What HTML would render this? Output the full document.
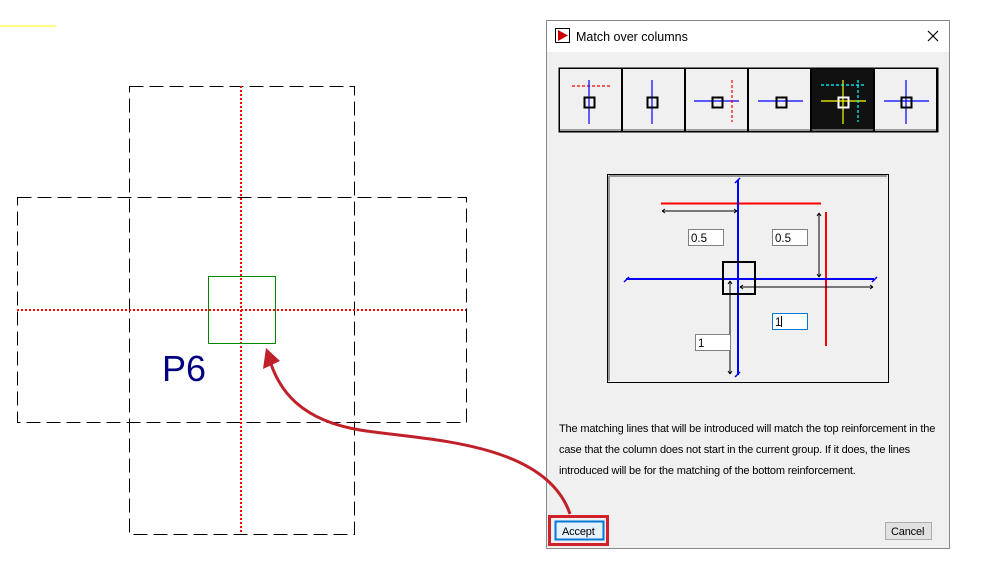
<!DOCTYPE html>
<html><head><style>
body{margin:0;width:984px;height:582px;background:#fff;overflow:hidden;font-family:"Liberation Sans",sans-serif}
svg{position:absolute;left:0;top:0}
.t{font-size:11px;fill:#000;letter-spacing:-0.17px}
</style></head><body>
<svg width="984" height="582" xmlns="http://www.w3.org/2000/svg">
<line x1="0" y1="26" x2="56" y2="26" stroke="#ff0" stroke-width="1"/>
<g fill="none" stroke="#000" stroke-dasharray="14,6">
<rect x="129.5" y="86.5" width="225" height="448"/>
<rect x="17.5" y="197.5" width="449" height="225"/>
</g>
<g stroke="#f00" stroke-width="2" stroke-dasharray="2,2">
<line x1="241" y1="86" x2="241" y2="534"/>
<line x1="17" y1="310" x2="466" y2="310"/>
</g>
<rect x="208.5" y="276.5" width="67" height="67" fill="none" stroke="#080"/>
<text x="162" y="381" font-size="36" fill="#000080" textLength="44" lengthAdjust="spacingAndGlyphs">P6</text>

<!-- dialog -->
<rect x="546.5" y="20.5" width="403" height="528" fill="#f0f0f0" stroke="#888"/>
<rect x="547" y="21" width="402" height="31" fill="#fff"/>
<rect x="555.5" y="28.5" width="14" height="14" fill="#fff" stroke="#000"/>
<polygon points="558,30 568,35.5 558,41" fill="#c00"/>
<text x="576" y="41" font-size="12.5" fill="#000">Match over columns</text>
<path d="M928 31 L938 41 M938 31 L928 41" stroke="#000" stroke-width="1.2"/>

<!-- buttons -->
<rect x="558.5" y="67.5" width="380" height="65" fill="#000"/>
<g fill="#f0f0f0">
<rect x="560" y="69" width="61" height="60"/>
<rect x="623" y="69" width="61" height="60"/>
<rect x="686" y="69" width="61" height="60"/>
<rect x="749" y="69" width="61" height="60"/>
<rect x="875" y="69" width="61" height="60"/>
</g>
<rect x="812" y="69" width="61" height="60" fill="#111"/>
<g fill="#a0a0a0"><rect x="560" y="129" width="61" height="2"/><rect x="623" y="129" width="61" height="2"/><rect x="686" y="129" width="61" height="2"/><rect x="749" y="129" width="61" height="2"/><rect x="875" y="129" width="61" height="2"/><rect x="812" y="129" width="61" height="2" fill="#666"/></g>
<g fill="none" stroke-width="1.2">
<line x1="572" y1="86" x2="610" y2="86" stroke="#f00" stroke-dasharray="3,2"/>
<line x1="589" y1="80" x2="589" y2="124" stroke="#00f"/>
<rect x="584.5" y="97.5" width="10" height="10" stroke="#000" stroke-width="2"/>
<line x1="652" y1="80" x2="652" y2="124" stroke="#00f"/>
<rect x="647.5" y="97.5" width="10" height="10" stroke="#000" stroke-width="2"/>
<line x1="694" y1="101" x2="739" y2="101" stroke="#00f"/>
<line x1="732" y1="80" x2="732" y2="122" stroke="#f00" stroke-dasharray="3,2"/>
<rect x="712.5" y="97.5" width="10" height="10" stroke="#000" stroke-width="2"/>
<line x1="758" y1="101" x2="803" y2="101" stroke="#00f"/>
<rect x="776.5" y="97.5" width="10" height="10" stroke="#000" stroke-width="2"/>
<line x1="821" y1="101" x2="866" y2="101" stroke="#ff0"/>
<line x1="843" y1="80" x2="843" y2="124" stroke="#ff0"/>
<line x1="821" y1="85" x2="864" y2="85" stroke="#0ff" stroke-dasharray="3,2"/>
<line x1="858" y1="80" x2="858" y2="122" stroke="#0ff" stroke-dasharray="3,2"/>
<rect x="838.5" y="97.5" width="10" height="10" stroke="#fff" stroke-width="2"/>
<line x1="884" y1="101" x2="929" y2="101" stroke="#00f"/>
<line x1="906" y1="80" x2="906" y2="124" stroke="#00f"/>
<rect x="901.5" y="97.5" width="10" height="10" stroke="#000" stroke-width="2"/>
</g>

<!-- diagram -->
<rect x="607.5" y="174.5" width="281" height="208" fill="#f0f0f0" stroke="#000"/>
<line x1="609" y1="176" x2="887" y2="176" stroke="#999" stroke-width="2"/>
<line x1="609" y1="176" x2="609" y2="381" stroke="#999" stroke-width="2"/>
<line x1="661" y1="203.5" x2="821" y2="203.5" stroke="#f00" stroke-width="2"/>
<line x1="826" y1="212" x2="826" y2="346" stroke="#f00" stroke-width="2"/>
<line x1="738" y1="180" x2="738" y2="375" stroke="#00f" stroke-width="2"/>
<line x1="626" y1="279" x2="874" y2="279" stroke="#00f" stroke-width="2"/>
<path d="M735 183l5-5M735 377l5-5M624 282l5-5M872 282l5-5" stroke="#00f" stroke-width="1.5"/>
<rect x="723" y="262" width="32" height="32" fill="none" stroke="#000" stroke-width="2"/>
<g stroke="#000" fill="none" stroke-width="1">
<path d="M662 211H737M662 211l3-2M662 211l3 2M737 211l-3-2M737 211l-3 2"/>
<path d="M819 213V277M819 213l-2 3M819 213l2 3M819 277l-2-3M819 277l2-3"/>
<path d="M740 287H873M740 287l3-2M740 287l3 2M873 287l-3-2M873 287l-3 2"/>
<path d="M730 281V374M730 281l-2 3M730 281l2 3M730 374l-2-3M730 374l2-3"/>
</g>
<g fill="#fff" stroke="#808080">
<rect x="688.5" y="229.5" width="35" height="16"/>
<rect x="772.5" y="229.5" width="35" height="16"/>
<rect x="695.5" y="334.5" width="35" height="16"/>
<rect x="772.5" y="313.5" width="35" height="16" stroke="#0078d7"/>
</g>
<g font-size="11.5" fill="#000">
<text x="691" y="242">0.5</text><text x="775" y="242">0.5</text>
<text x="698" y="347">1</text><text x="775" y="326">1</text>
</g>
<line x1="781.5" y1="316" x2="781.5" y2="327" stroke="#000"/>

<text class="t" x="559" y="432">The matching lines that will be introduced will match the top reinforcement in the</text>
<text class="t" x="559" y="453">case that the column does not start in the current group. If it does, the lines</text>
<text class="t" x="559" y="474">introduced will be for the matching of the bottom reinforcement.</text>

<rect x="555.5" y="521.5" width="48" height="18" fill="#e5f1fb" stroke="#0078d7" stroke-width="2"/>
<text class="t" x="562" y="535">Accept</text>
<rect x="885.5" y="522.5" width="46" height="17" fill="#e1e1e1" stroke="#adadad"/>
<text class="t" x="891" y="535">Cancel</text>

<!-- annotation -->
<rect x="549.5" y="516.5" width="58" height="28" fill="none" stroke="#d0202a" stroke-width="3"/>
<path d="M570 514 C 545 440, 420 440, 360 430 C 300 420, 280 390, 271 364" fill="none" stroke="#c0202a" stroke-width="3"/>
<polygon points="266,348 263,369 280,361" fill="#c0202a"/>
</svg>
</body></html>
